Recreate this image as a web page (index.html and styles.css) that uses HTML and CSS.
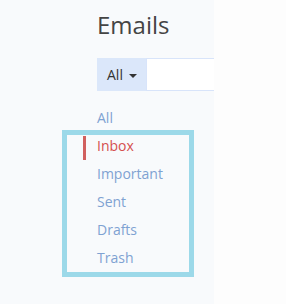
FILE: index.html
```html
<!DOCTYPE html>
<html lang="en">
<head>
    <meta charset="UTF-8">
    <meta name="viewport" content="width=device-width, initial-scale=1.0">
    <title>Emails</title>
    <link rel="stylesheet" href="styles.css">
</head>
<body>
    <div class="sidebar">
        <h1>Emails</h1>
        <div class="search-group">
            <button type="button" class="search-addon">All <span class="caret"></span></button>
            <input type="text" class="search-input">
        </div>
        <ul class="mail-nav">
            <li><a href="#">All</a></li>
            <li>
                <ul class="mail-folders">
                    <li><a href="#" class="active">Inbox</a></li>
                    <li><a href="#">Important</a></li>
                    <li><a href="#">Sent</a></li>
                    <li><a href="#">Drafts</a></li>
                    <li><a href="#">Trash</a></li>
                </ul>
            </li>
        </ul>
    </div>
</body>
</html>
```
FILE: styles.css
```css
html, body {
    height: 100%;
}
body {
    margin: 0;
    background: #fdfdfd;
    font-family: "Open Sans", "Noto Sans", sans-serif;
    color: #444;
}
.sidebar {
    width: 214px;
    height: 100%;
    box-sizing: border-box;
    padding: 9px 0 0 97px;
    background: #f8fafc;
    overflow: hidden;
}
h1 {
    margin: 0;
    font-size: 24px;
    line-height: 32px;
    font-weight: normal;
    color: #444;
}
.search-group {
    display: flex;
    width: 160px;
    height: 33px;
    margin-top: 17px;
}
.search-addon {
    width: 49px;
    flex-shrink: 0;
    padding: 0 0 0 10px;
    border: none;
    background: #dbe7fa;
    font-family: inherit;
    font-size: 14px;
    color: #333;
    text-align: left;
}
.caret {
    display: inline-block;
    width: 0;
    height: 0;
    margin-left: 2px;
    vertical-align: middle;
    border-top: 4px solid #333;
    border-left: 4px solid transparent;
    border-right: 4px solid transparent;
}
.search-input {
    flex: 1;
    min-width: 0;
    border: 1px solid #d8e4fa;
    border-right: none;
    background: #fff;
    outline: none;
}
.mail-nav, .mail-folders {
    list-style: none;
    margin: 0;
    padding: 0;
}
.mail-nav {
    margin: 17px 0 0 -14px;
}
.mail-nav a {
    display: block;
    line-height: 20px;
    padding: 0 0 4px 11px;
    border-left: 3px solid transparent;
    font-size: 14px;
    color: #7fa2d2;
    text-decoration: none;
}
.mail-nav a.active {
    color: #d5504f;
    border-left-color: #d1605f;
}
.mail-folders {
    display: flex;
    flex-direction: column;
    gap: 4px;
    width: 132px;
    box-sizing: border-box;
    margin: -2px 0 0 -21px;
    padding: 1px 0 0 16px;
    border: 5px solid #9cd9e9;
}
```
